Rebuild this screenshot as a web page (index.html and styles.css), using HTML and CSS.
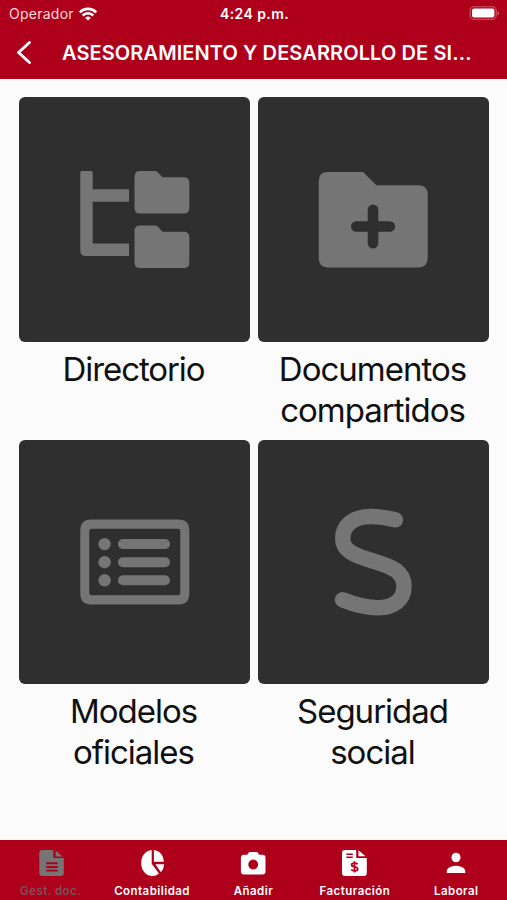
FILE: index.html
```html
<!DOCTYPE html>
<html lang="es">
<head>
<meta charset="utf-8">
<meta name="viewport" content="width=device-width">
<title>Gestión documental</title>
<link rel="stylesheet" href="styles.css">
</head>
<body>
<div class="app">
  <header class="top">
    <div class="status">
      <div class="carrier"><span>Operador</span>
        <svg width="20" height="14" viewBox="79 6 20 14" fill="none" stroke="#fff" stroke-width="2.6"><path d="M80.700 11.300a11.700 11.700 0 0 1 16.600 0M83.700 14.500a7.400 7.400 0 0 1 10.600 0"/><path d="M86.200 16.900a4 4 0 0 1 5.600 0L89 19.600z" fill="#fff" stroke="none"/></svg>
      </div>
      <div class="clock">4:24 p.m.</div>
      <svg class="battery" width="31" height="15" viewBox="470 6 31 15"><rect x="471.200" y="6.700" width="26" height="12.600" rx="3.800" fill="none" stroke="#d05c6b" stroke-width="1.100"/><rect x="473" y="8.500" width="22.400" height="9" rx="2" fill="#fff"/><path d="M498.500 11v4.500q1.500-.6 1.500-2.250T498.500 11z" fill="#d05c6b"/></svg>
    </div>
    <div class="nav">
      <svg width="16" height="26" viewBox="16 39 16 26" fill="none" stroke="#fff" stroke-width="2.900" stroke-linecap="round" stroke-linejoin="round"><path d="M29.500 41.500 18.500 51.500 29.500 61.500"/></svg>
      <h1>ASESORAMIENTO Y DESARROLLO DE SI...</h1>
    </div>
  </header>
  <main class="grid">
    <section class="item">
      <svg class="tile" viewBox="19 97 231 244.500"><path d="M82 171h9q1.700 0 1.700 1.700v16.600H129v12.400H92.700v41.800H129V256H85.500q-5.200 0-5.200-5.200v-78q0-1.800 1.700-1.800z"/><path id="folder" d="M140 171h15q1.600 0 2.700 1.200l4.700 5.100h21.400q5.500 0 5.500 5.500v25.200q0 5.500-5.500 5.500H140q-5.500 0-5.500-5.500v-31.500q0-5.500 5.500-5.500z"/><use href="#folder" y="54.400"/></svg>
      <p class="directory">Directorio</p>
    </section>
    <section class="item">
      <svg class="tile" viewBox="258 97 231 244.500"><path d="M328 172h35l13.300 13.300h42q9.400 0 9.400 9.400v63.400q0 9.400-9.400 9.400H328q-9.300 0-9.300-9.400v-76.700q0-9.400 9.300-9.400z"/><path class="plus" d="M356.300 226.500h33.500M373 209.700v33.600"/></svg>
      <p>Documentos<br>compartidos</p>
    </section>
    <section class="item">
      <svg class="tile" viewBox="19 439.500 231 244.500"><path fill-rule="evenodd" d="M91.300 519h87q11 0 11 11v63q0 11-11 11h-87q-11 0-11-11v-63q0-11 11-11zm.5 9.300q-2.500 0-2.500 2.500v61.400q0 2.500 2.500 2.500h86q2.500 0 2.500-2.500v-61.400q0-2.500-2.500-2.500z"/><circle cx="104.600" cy="543.600" r="6.200"/><circle cx="104.600" cy="561.700" r="6.200"/><circle cx="104.600" cy="579.800" r="6.200"/><path class="rows" d="M123 543.600h42M123 561.700h42M123 579.800h42"/></svg>
      <p>Modelos<br>oficiales</p>
    </section>
    <section class="item">
      <svg class="tile" viewBox="258 439.500 231 244.500"><path class="curve" d="M395.300 519.300C385 516.800 379 516 371 516C353 516 342.700 525 342.700 538C342.700 550 353 554.500 373 560.500C393 566.500 404 571 404 586C404 599 394 607.300 378 607.300C364 607.300 353 603.500 342.500 599.300"/></svg>
      <p>Seguridad<br>social</p>
    </section>
  </main>
  <nav class="tabs">
    <a class="tab active">
      <svg viewBox="36.700 848 28 30"><path fill-rule="evenodd" d="M42 850h11v8h10.500v15q0 3-3 3H42q-3 0-3-3v-20q0-3 3-3zm4 12.300v1.900h11.500v-1.900zm0 3.700v1.900h11.500V866zm0 3.700v1.900h11.500v-1.900z"/><path d="M55.300 850.500l7 6h-7z"/></svg>
      <span>Gest. doc.</span>
    </a>
    <a class="tab">
      <svg viewBox="138.100 848 28 30"><path d="M151.800 850v13.700l7.200 9.900q-2.800 2.500-6.500 2.500c-6.500 0-11.200-5.600-11.200-13s4.500-12.500 10.500-13.100z"/><path d="M154 850c5.800.6 9.700 5.200 9.900 11.800H154zM155.500 864.200h8.800q-.3 4.700-3.300 8.100z"/></svg>
      <span>Contabilidad</span>
    </a>
    <a class="tab">
      <svg viewBox="239.300 848 28 30"><path fill-rule="evenodd" d="M249.500 852h8l2 2.700h3.300q3 0 3 3v13.800q0 3-3 3h-18.600q-3 0-3-3v-13.800q0-3 3-3h3.300zm4 7.600a4.900 4.900 0 1 0 .01 0z"/></svg>
      <span>Añadir</span>
    </a>
    <a class="tab">
      <svg viewBox="341 848 28 30"><path fill-rule="evenodd" d="M345 850h11.200v8h10.600v15q0 3-3 3H345q-3 0-3-3v-20q0-3 3-3zm1.300 3.500v1.600h6.500v-1.600zm0 3v1.600h6.500v-1.600z"/><path d="M358.500 850.300l7 6h-7z"/><path class="money" d="M357.600 864.200c-1-1.400-6-1.700-6 .8 0 2.600 6.100 1.200 6.100 3.900 0 2.600-5.200 2.300-6.500.5M354.500 861.300v11.200"/></svg>
      <span>Facturación</span>
    </a>
    <a class="tab">
      <svg viewBox="442 848 28 30"><ellipse cx="456" cy="857.500" rx="4.500" ry="4.800"/><path d="M446.700 873v-1.700q0-2.400 2.400-3.800 2.900-1.700 6.900-1.700t6.900 1.700q2.400 1.400 2.400 3.800v1.700z"/></svg>
      <span>Laboral</span>
    </a>
  </nav>
</div>
</body>
</html>
```
FILE: styles.css
```css
* { box-sizing: border-box; }
body { margin: 0; font-family: Inter, "Liberation Sans", sans-serif; background: #fbfbfb; color: #101010; }
svg { display: block; flex: none; }
.app { width: 507px; height: 900px; display: flex; flex-direction: column; overflow: hidden; }
.top { height: 79px; background: #ae001b; color: #fff; flex: none; }
.status { height: 27px; display: grid; grid-template-columns: 1fr auto 1fr; align-items: center; padding: 0 7px 0 9px; }
.carrier { display: flex; align-items: center; gap: 4px; font-size: 14px; letter-spacing: .25px; color: #f7d9dc; }
.clock { font-size: 14px; font-weight: 600; letter-spacing: .4px; }
.battery { justify-self: end; }
.nav { height: 52px; display: flex; align-items: center; padding: 0 0 1px 16px; gap: 30px; }
h1 { margin: 0; font-size: 20px; font-weight: 600; letter-spacing: .1px; white-space: nowrap; }
.grid { flex: 1; display: grid; grid-template-columns: 231px 231px; grid-template-rows: 342.5px 342px; column-gap: 8px; padding: 18px 0 0 19px; }
.item { text-align: center; }
.tile { width: 231px; height: 244.500px; border-radius: 6px; background: #2f2f2f; fill: #757575; }
.plus { stroke: #2f2f2f; stroke-width: 10.600px; stroke-linecap: round; }
.rows { stroke: #757575; stroke-width: 10px; stroke-linecap: round; }
.curve { fill: none; stroke: #757575; stroke-width: 15.500px; stroke-linecap: round; }
p { margin: 7px 0 0; padding-right: 2px; font-size: 33px; line-height: 41px; letter-spacing: -1px; white-space: nowrap; }
.directory { letter-spacing: -1.1px; }
.tabs { height: 60px; flex: none; display: grid; grid-template-columns: repeat(5, 1fr); background: #ae001b; color: #fff; }
.tab { display: flex; flex-direction: column; align-items: center; padding-top: 8px; font-size: 11.500px; font-weight: 600; letter-spacing: .45px; line-height: 14px; white-space: nowrap; }
.tab svg { width: 28px; height: 30px; fill: #fff; margin-bottom: 6px; }
.active { color: #79535a; }
.active svg { fill: #757575; }
.money { fill: none; stroke: #ae001b; stroke-width: 1.700px; }
```
